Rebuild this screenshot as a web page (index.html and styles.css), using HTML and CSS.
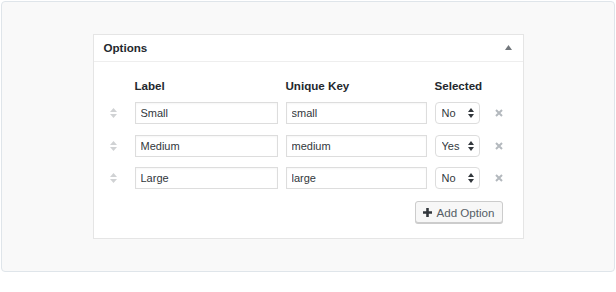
FILE: index.html
```html
<!DOCTYPE html>
<html lang="en">
<head>
    <meta charset="UTF-8">
    <meta name="viewport" content="width=device-width, initial-scale=1.0">
    <title>Options</title>
    <link rel="stylesheet" href="styles.css">
</head>
<body>
    <div class="stage">
        <div class="panel">
            <div class="panel-head">
                <span class="panel-title">Options</span>
                <svg class="toggle" width="7" height="5" viewBox="0 0 7 5"><path d="M3.5 0L7 5H0z" fill="#72777c"/></svg>
            </div>
            <div class="panel-body">
                <div class="opts">
                    <span></span>
                    <span class="col-title">Label</span>
                    <span class="col-title">Unique Key</span>
                    <span class="col-title">Selected</span>
                    <span></span>

                    <span class="handle"><svg width="7" height="10" viewBox="0 0 7 10"><path d="M3.5 0L7 4H0zM3.5 10L7 6H0z" fill="#d0d2d4"/></svg></span>
                    <input class="field" type="text" value="Small">
                    <input class="field" type="text" value="small">
                    <div class="pick">
                        <select><option>No</option><option>Yes</option></select>
                        <svg class="pick-arrow" width="6" height="10" viewBox="0 0 6 10"><path d="M3 0L6 4H0zM3 10L6 6H0z" fill="#32373c"/></svg>
                    </div>
                    <span class="remove"><svg width="8" height="8" viewBox="0 0 8 8"><path d="M1 1L7 7M7 1L1 7" stroke="#b4b9be" stroke-width="2"/></svg></span>

                    <span class="handle"><svg width="7" height="10" viewBox="0 0 7 10"><path d="M3.5 0L7 4H0zM3.5 10L7 6H0z" fill="#d0d2d4"/></svg></span>
                    <input class="field" type="text" value="Medium">
                    <input class="field" type="text" value="medium">
                    <div class="pick">
                        <select><option>No</option><option selected>Yes</option></select>
                        <svg class="pick-arrow" width="6" height="10" viewBox="0 0 6 10"><path d="M3 0L6 4H0zM3 10L6 6H0z" fill="#32373c"/></svg>
                    </div>
                    <span class="remove"><svg width="8" height="8" viewBox="0 0 8 8"><path d="M1 1L7 7M7 1L1 7" stroke="#b4b9be" stroke-width="2"/></svg></span>

                    <span class="handle"><svg width="7" height="10" viewBox="0 0 7 10"><path d="M3.5 0L7 4H0zM3.5 10L7 6H0z" fill="#d0d2d4"/></svg></span>
                    <input class="field" type="text" value="Large">
                    <input class="field" type="text" value="large">
                    <div class="pick">
                        <select><option>No</option><option>Yes</option></select>
                        <svg class="pick-arrow" width="6" height="10" viewBox="0 0 6 10"><path d="M3 0L6 4H0zM3 10L6 6H0z" fill="#32373c"/></svg>
                    </div>
                    <span class="remove"><svg width="8" height="8" viewBox="0 0 8 8"><path d="M1 1L7 7M7 1L1 7" stroke="#b4b9be" stroke-width="2"/></svg></span>
                </div>
                <div class="actions">
                    <button class="add-btn" type="button">
                        <svg width="9" height="9" viewBox="0 0 9 9"><path d="M4.5 0V9M0 4.5H9" stroke="#32373c" stroke-width="2.6"/></svg>
                        <span>Add Option</span>
                    </button>
                </div>
            </div>
        </div>
    </div>
</body>
</html>
```

FILE: styles.css
```css
body{
    margin: 0;
    padding: 1px;
    background: #fff;
    font-family: "Liberation Sans", Arial, sans-serif;
    color: #23282d;
}
.stage{
    background: #f9f9f9;
    border: 1px solid #dfe5ea;
    border-radius: 4px;
    padding: 32px 0;
}
.panel{
    width: 429px;
    margin: 0 auto;
    background: #fff;
    border: 1px solid #e5e5e5;
}
.panel-head{
    height: 26px;
    border-bottom: 1px solid #eeeeee;
    display: flex;
    align-items: center;
    justify-content: space-between;
    padding: 0 11px 0 10px;
}
.panel-title{
    font-size: 11.6px;
    font-weight: bold;
    padding-bottom: 1px;
}
.toggle{
    margin-top: -2px;
}
.panel-body{
    padding: 16px 0 15px;
}
.opts{
    display: grid;
    grid-template-columns: 33px 143px 141px 45px 22px;
    column-gap: 8px;
    row-gap: 10.5px;
    align-items: center;
}
.col-title{
    font-size: 11.6px;
    font-weight: bold;
    line-height: 16px;
    margin-bottom: -2.5px;
}
.handle, .remove{
    display: flex;
    justify-content: center;
    align-items: center;
}
.handle{
    padding-left: 7px;
}
.field{
    box-sizing: border-box;
    height: 22px;
    width: 100%;
    margin: 0;
    border: 1px solid #dddddd;
    border-radius: 0;
    box-shadow: inset 0 1px 2px rgba(0, 0, 0, 0.04);
    padding: 0 5px;
    font-family: "Liberation Sans", Arial, sans-serif;
    font-size: 11px;
    color: #32373c;
    background: #fff;
    outline: none;
}
.pick{
    position: relative;
    height: 22px;
}
.pick select{
    appearance: none;
    -webkit-appearance: none;
    box-sizing: border-box;
    width: 100%;
    height: 22px;
    margin: 0;
    border: 1px solid #dddddd;
    border-radius: 4px;
    background: #fff;
    padding: 0 0 0 6px;
    font-family: "Liberation Sans", Arial, sans-serif;
    font-size: 11px;
    color: #32373c;
    outline: none;
}
.pick-arrow{
    position: absolute;
    right: 6px;
    top: 6px;
    pointer-events: none;
}
.actions{
    display: flex;
    justify-content: flex-end;
    padding: 12px 20px 0 0;
}
.add-btn{
    display: flex;
    align-items: center;
    gap: 4px;
    height: 22px;
    box-sizing: border-box;
    padding: 0 7px 0 7px;
    background: #f7f7f7;
    border: 1px solid #cccccc;
    border-radius: 3px;
    box-shadow: 0 1px 0 #cccccc;
    font-family: "Liberation Sans", Arial, sans-serif;
    font-size: 11.6px;
    color: #555d66;
}
```
